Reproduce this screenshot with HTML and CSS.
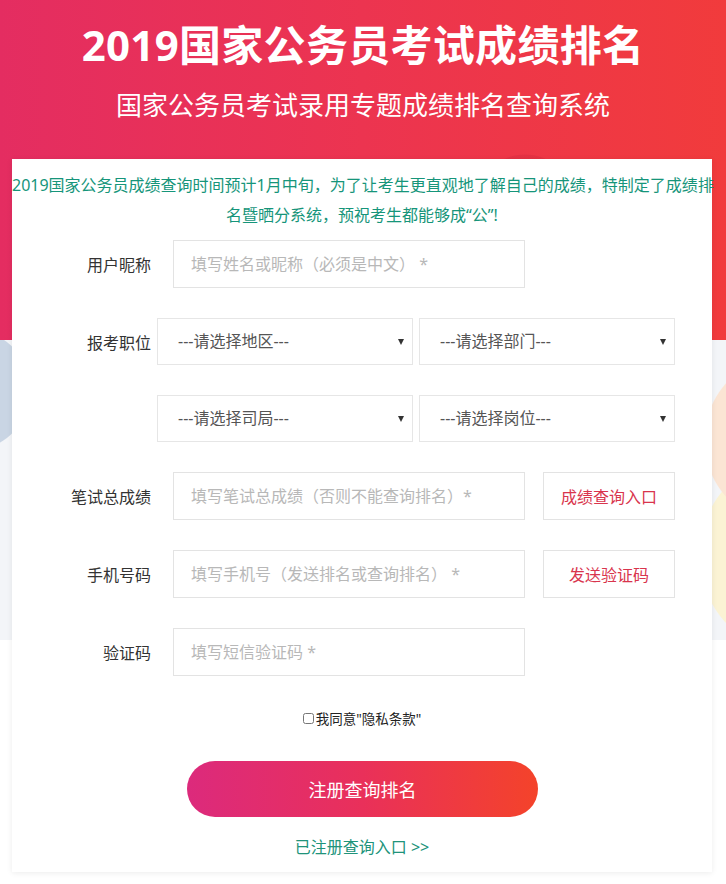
FILE: index.html
```html
<!DOCTYPE html>
<html lang="zh-CN">
<head>
<meta charset="utf-8">
<title>2019国家公务员考试成绩排名</title>
<link rel="stylesheet" href="styles.css">
</head>
<body>
<div class="page">
  <header class="hero">
    <h1 class="title">2019国家公务员考试成绩排名</h1>
    <p class="subtitle">国家公务员考试录用专题成绩排名查询系统</p>
  </header>
  <main class="card">
    <p class="notice">
      <span class="notice-line">2019国家公务员成绩查询时间预计1月中旬，为了让考生更直观地了解自己的成绩，特制定了成绩排</span>
      <span class="notice-line">名暨晒分系统，预祝考生都能够成“公”!</span>
    </p>
    <form class="form">
      <div class="row">
        <label class="label">用户昵称</label>
        <input class="field" type="text" placeholder="填写姓名或昵称（必须是中文） *">
      </div>
      <div class="row">
        <span class="label">报考职位</span>
        <div class="selects">
          <div class="select">---请选择地区---</div>
          <div class="select">---请选择部门---</div>
        </div>
      </div>
      <div class="row">
        <span class="label"></span>
        <div class="selects">
          <div class="select">---请选择司局---</div>
          <div class="select">---请选择岗位---</div>
        </div>
      </div>
      <div class="row">
        <label class="label">笔试总成绩</label>
        <input class="field" type="text" placeholder="填写笔试总成绩（否则不能查询排名）*">
        <button type="button" class="side-btn">成绩查询入口</button>
      </div>
      <div class="row">
        <label class="label">手机号码</label>
        <input class="field" type="text" placeholder="填写手机号（发送排名或查询排名） *">
        <button type="button" class="side-btn">发送验证码</button>
      </div>
      <div class="row row-last">
        <label class="label">验证码</label>
        <input class="field" type="text" placeholder="填写短信验证码 *">
      </div>
      <div class="agree">
        <input class="check" type="checkbox" id="agree"><label for="agree">我同意"隐私条款"</label>
      </div>
      <div class="submit-wrap">
        <button type="button" class="submit">注册查询排名</button>
      </div>
      <div class="login-link">已注册查询入口 &gt;&gt;</div>
    </form>
  </main>
</div>
</body>
</html>
```

FILE: styles.css
```css
* { box-sizing: border-box; }

html, body {
  margin: 0;
  padding: 0;
}

body {
  font-family: "Noto Sans", "Noto Sans CJK SC", sans-serif;
  color: #333;
  background: #fff;
}

.page {
  min-height: 884px;
  padding-bottom: 12px;
  background-color: #fff;
  background-image:
    radial-gradient(circle at 525px 205px, rgba(140, 10, 40, 0.10) 0 50px, transparent 51px),
    linear-gradient(90deg, #e42d61 0%, #ec3450 50%, #f13b3c 100%),
    radial-gradient(circle at -30px 390px, #c9d5e4 0 60px, transparent 61px),
    radial-gradient(circle at 790px 440px, #fbe5d4 0 85px, transparent 86px),
    radial-gradient(circle at 800px 555px, #fbf3d4 0 100px, transparent 101px),
    linear-gradient(#f3f5f8, #f3f5f8);
  background-repeat: no-repeat;
  background-size:
    100% 340px,
    100% 340px,
    100% 640px,
    100% 640px,
    100% 640px,
    100% 640px;
}

.hero {
  padding-top: 16px;
  text-align: center;
  color: #fff;
}

.title {
  margin: 0;
  font-size: 42px;
  line-height: 58px;
  font-weight: 700;
  letter-spacing: 0.3px;
}

.subtitle {
  margin: 11px 0 0;
  font-size: 26px;
  line-height: 40px;
  font-weight: 400;
}

.card {
  margin: 34px 14px 0 12px;
  background: #fff;
  box-shadow: 0 1px 6px rgba(0, 0, 0, 0.08);
  padding: 11px 0 13px;
}

.notice {
  margin: 0;
  color: #16957a;
  font-size: 16px;
  line-height: 30px;
  text-align: center;
}

.notice-line {
  display: block;
  white-space: nowrap;
}

.form {
  margin-top: 10px;
  display: flex;
  flex-direction: column;
}

.row {
  display: flex;
  align-items: center;
  margin-bottom: 30px;
}

.row-last {
  margin-bottom: 0;
}

.label {
  width: 139px;
  flex: none;
  text-align: right;
  font-size: 16px;
  color: #333;
}

.field {
  margin-left: 22px;
  width: 352px;
  height: 48px;
  border: 1px solid #e3e3e3;
  padding: 0 17px;
  font-family: inherit;
  font-size: 16px;
  color: #333;
  background: #fff;
  outline: none;
  border-radius: 0;
}

.field::placeholder {
  color: #b8b8b8;
}

.side-btn {
  margin-left: 18px;
  width: 132px;
  height: 48px;
  border: 1px solid #e3e3e3;
  background: #fff;
  color: #d9354d;
  font-family: inherit;
  font-size: 16px;
  padding: 0;
  border-radius: 0;
}

.selects {
  margin-left: 6px;
  display: flex;
  gap: 6px;
}

.select {
  position: relative;
  width: 256px;
  height: 47px;
  line-height: 45px;
  border: 1px solid #e6e6e6;
  padding-left: 20px;
  font-size: 16px;
  color: #555;
  background: #fff;
}

.select::after {
  content: "";
  position: absolute;
  right: 8px;
  top: 20px;
  border-left: 3.5px solid transparent;
  border-right: 3.5px solid transparent;
  border-top: 6px solid #333;
}

.agree {
  margin-top: 32px;
  display: flex;
  justify-content: center;
  align-items: center;
  height: 20px;
  font-size: 13.5px;
  color: #222;
}

.check {
  width: 11px;
  height: 11px;
  margin: 0 2px 0 0;
}

.submit-wrap {
  margin-top: 33px;
  display: flex;
  justify-content: center;
}

.submit {
  width: 351px;
  height: 56px;
  border: none;
  border-radius: 28px;
  background: linear-gradient(90deg, #dc2a7c 0%, #e9305a 50%, #f4432a 100%);
  color: #fff;
  font-family: inherit;
  font-size: 18px;
  padding: 0;
  margin-left: 1px;
}

.login-link {
  margin-top: 18px;
  text-align: center;
  line-height: 24px;
  font-size: 16px;
  color: #20937a;
}
```
